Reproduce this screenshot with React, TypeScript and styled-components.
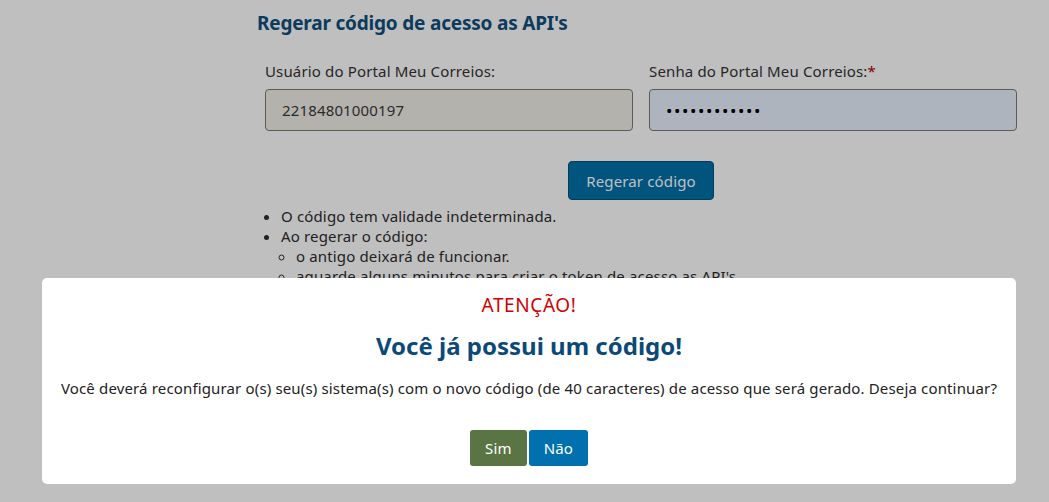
import React from "react";
import styled, { createGlobalStyle } from "styled-components";

const GlobalStyle = createGlobalStyle`
    html, body {
        margin: 0;
        padding: 0;
        background: #ffffff;
        font-family: "Noto Sans", "Open Sans", sans-serif;
        color: #333333;
        letter-spacing: 0.15px;
    }
`;

const Page = styled.div`
    width: 768px;
    margin-left: 257px;
    padding-top: 10px;
`;

const Title = styled.h2`
    margin: 0 0 25px 0;
    font-size: 19px;
    font-weight: 700;
    color: #114f7d;
    letter-spacing: -0.2px;
`;

const FormRow = styled.div`
    display: grid;
    grid-template-columns: 1fr 1fr;
`;

const Field = styled.div`
    display: flex;
    flex-direction: column;
    padding: 0 8px;
`;

const Label = styled.label`
    font-size: 15px;
    color: #333333;
    margin-bottom: 8px;
    line-height: 20px;
`;

const Required = styled.span`
    color: #b30000;
`;

const Input = styled.input<{ $secret?: boolean }>`
    height: 42px;
    box-sizing: border-box;
    border: 1px solid #7d7871;
    border-radius: 4px;
    padding: 0 16px;
    font-family: inherit;
    font-size: ${(p) => (p.$secret ? "17px" : "15px")};
    color: ${(p) => (p.$secret ? "#000000" : "#3a3a3a")};
    background: ${(p) => (p.$secret ? "#e8f0fe" : "#f1eee7")};
    letter-spacing: ${(p) => (p.$secret ? "1.6px" : "0.15px")};
    outline: none;
`;

const ButtonRow = styled.div`
    display: flex;
    justify-content: center;
    margin-top: 30px;
`;

const PrimaryButton = styled.button`
    height: 39px;
    padding: 0 17px;
    border: 1px solid #00517d;
    border-radius: 4px;
    background: #0070a9;
    color: #ffffff;
    font-family: inherit;
    font-size: 15px;
    letter-spacing: 0.15px;
`;

const InfoList = styled.ul`
    margin: 6px 0 0 0;
    padding-left: 24px;
    font-size: 15px;
    line-height: 20px;
    color: #2d2d2d;

    ul {
        margin: 0;
        padding-left: 15px;
        list-style-type: circle;
    }
`;

const Overlay = styled.div`
    position: fixed;
    inset: 0;
    background: rgba(0, 0, 0, 0.25);
    display: flex;
    align-items: flex-end;
    padding: 0 33px 18px 42px;
`;

const Modal = styled.div`
    flex: 1;
    height: 206px;
    box-sizing: border-box;
    background: #ffffff;
    border-radius: 5px;
    display: flex;
    flex-direction: column;
    align-items: center;
    padding-top: 14px;
`;

const Warning = styled.div`
    color: #d00000;
    font-size: 19px;
    line-height: 26px;
    letter-spacing: 0.6px;
`;

const ModalTitle = styled.h2`
    margin: 12px 0 0 0;
    font-size: 24px;
    line-height: 32px;
    font-weight: 700;
    color: #0b4a78;
    letter-spacing: 0;
`;

const ModalText = styled.p`
    margin: 16px 0 0 0;
    font-size: 15px;
    line-height: 20px;
    color: #222222;
`;

const ModalActions = styled.div`
    display: flex;
    gap: 2px;
    margin-top: 32px;
`;

const ActionButton = styled.button<{ $variant: "yes" | "no" }>`
    height: 36px;
    padding: 0 15px;
    border: none;
    border-radius: 3px;
    background: ${(p) => (p.$variant === "yes" ? "#5b7444" : "#0070ae")};
    color: #ffffff;
    font-family: inherit;
    font-size: 15px;
    letter-spacing: 0.15px;
`;

export default function App() {
    return (
        <>
            <GlobalStyle />
            <Page>
                <Title>Regerar código de acesso as API's</Title>
                <FormRow>
                    <Field>
                        <Label>Usuário do Portal Meu Correios:</Label>
                        <Input defaultValue="22184801000197" disabled />
                    </Field>
                    <Field>
                        <Label>
                            Senha do Portal Meu Correios:<Required>*</Required>
                        </Label>
                        <Input $secret type="password" defaultValue="............" />
                    </Field>
                </FormRow>
                <ButtonRow>
                    <PrimaryButton>Regerar código</PrimaryButton>
                </ButtonRow>
                <InfoList>
                    <li>O código tem validade indeterminada.</li>
                    <li>
                        Ao regerar o código:
                        <ul>
                            <li>o antigo deixará de funcionar.</li>
                            <li>aguarde alguns minutos para criar o token de acesso as API's.</li>
                        </ul>
                    </li>
                </InfoList>
            </Page>
            <Overlay>
                <Modal>
                    <Warning>ATENÇÃO!</Warning>
                    <ModalTitle>Você já possui um código!</ModalTitle>
                    <ModalText>
                        Você deverá reconfigurar o(s) seu(s) sistema(s) com o novo código (de 40 caracteres) de acesso que será gerado. Deseja continuar?
                    </ModalText>
                    <ModalActions>
                        <ActionButton $variant="yes">Sim</ActionButton>
                        <ActionButton $variant="no">Não</ActionButton>
                    </ModalActions>
                </Modal>
            </Overlay>
        </>
    );
}
